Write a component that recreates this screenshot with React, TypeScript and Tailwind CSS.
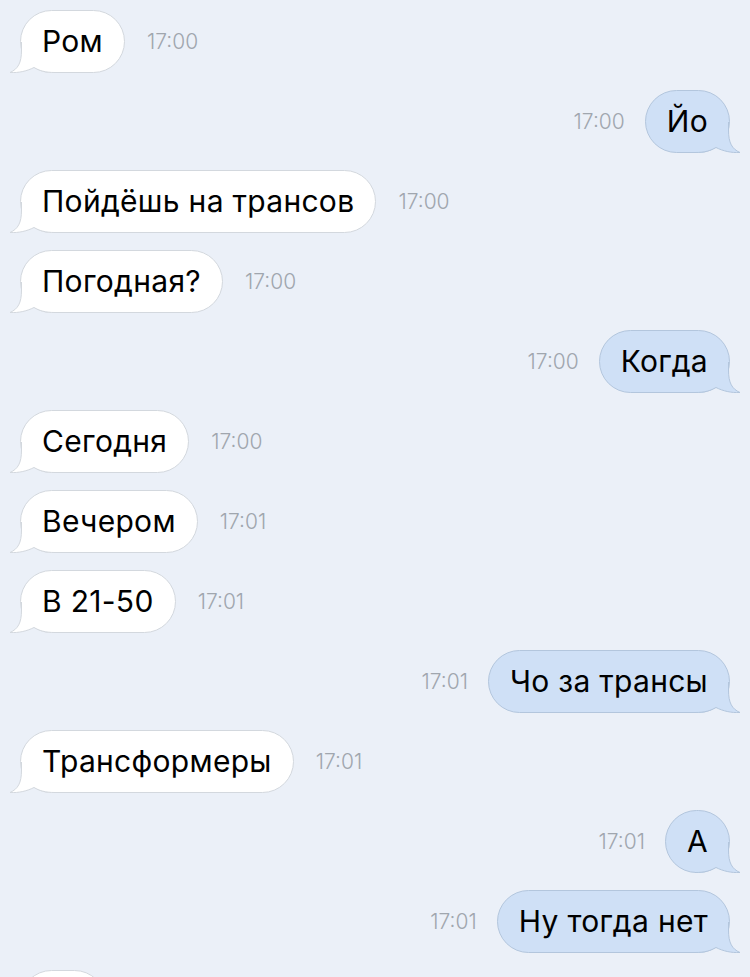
import React from "react";

type Msg = { text: string; time: string; out?: boolean };

const MESSAGES: Msg[] = [
  { text: "Ром", time: "17:00" },
  { text: "Йо", time: "17:00", out: true },
  { text: "Пойдёшь на трансов", time: "17:00" },
  { text: "Погодная?", time: "17:00" },
  { text: "Когда", time: "17:00", out: true },
  { text: "Сегодня", time: "17:00" },
  { text: "Вечером", time: "17:01" },
  { text: "В 21-50", time: "17:01" },
  { text: "Чо за трансы", time: "17:01", out: true },
  { text: "Трансформеры", time: "17:01" },
  { text: "А", time: "17:01", out: true },
  { text: "Ну тогда нет", time: "17:01", out: true },
];

const Tail: React.FC<{ out?: boolean }> = ({ out }) => {
  const fill = out ? "#cfe0f6" : "#ffffff";
  const stroke = out ? "#b3c6dd" : "#d3d8de";
  return (
    <svg
      width="46"
      height="31"
      viewBox="0 0 46 31"
      className={
        out
          ? "absolute -right-[12px] -bottom-px -scale-x-100"
          : "absolute -left-[12px] -bottom-px"
      }
    >
      <path
        d="M12.5 0 L12.5 8 C12.5 21 9 27 1 30.5 C10 31 18 29 25 25.5 C30 28.5 36 30.5 46 30.5 L46 0 Z"
        fill={fill}
      />
      <path
        d="M12.5 0 L12.5 8 C12.5 21 9 27 1 30.5 C10 31 18 29 25 25.5 C30 28.5 36 30.5 46 30.5"
        fill="none"
        stroke={stroke}
        strokeWidth="1"
      />
    </svg>
  );
};

const Bubble: React.FC<{ msg: Msg }> = ({ msg }) => (
  <div
    className={`relative flex h-[63px] items-center rounded-full border px-[21px] text-[30px] tracking-[0.3px] text-black ${
      msg.out ? "border-[#b3c6dd] bg-[#cfe0f6]" : "border-[#d3d8de] bg-white"
    }`}
  >
    <Tail out={msg.out} />
    <span className="relative">{msg.text}</span>
  </div>
);

const Time: React.FC<{ value: string }> = ({ value }) => (
  <span className="text-[21px] font-light text-[#a0a6ae]">{value}</span>
);

export default function App() {
  return (
    <div
      className="h-[977px] w-[750px] overflow-hidden bg-[#ebf0f8]"
      style={{ fontFamily: "Inter, 'Noto Sans', sans-serif" }}
    >
      <div className="flex flex-col gap-[17px] px-[20px] pt-[10px]">
        {MESSAGES.map((m, i) =>
          m.out ? (
            <div key={i} className="flex items-center justify-end gap-[20px]">
              <Time value={m.time} />
              <Bubble msg={m} />
            </div>
          ) : (
            <div key={i} className="flex items-center gap-[22px]">
              <Bubble msg={m} />
              <Time value={m.time} />
            </div>
          )
        )}
        {/* next message, cut off by the bottom edge */}
        <div className="flex">
          <div className="relative h-[63px] w-[86px] rounded-full border border-[#d3d8de] bg-white" />
        </div>
      </div>
    </div>
  );
}
